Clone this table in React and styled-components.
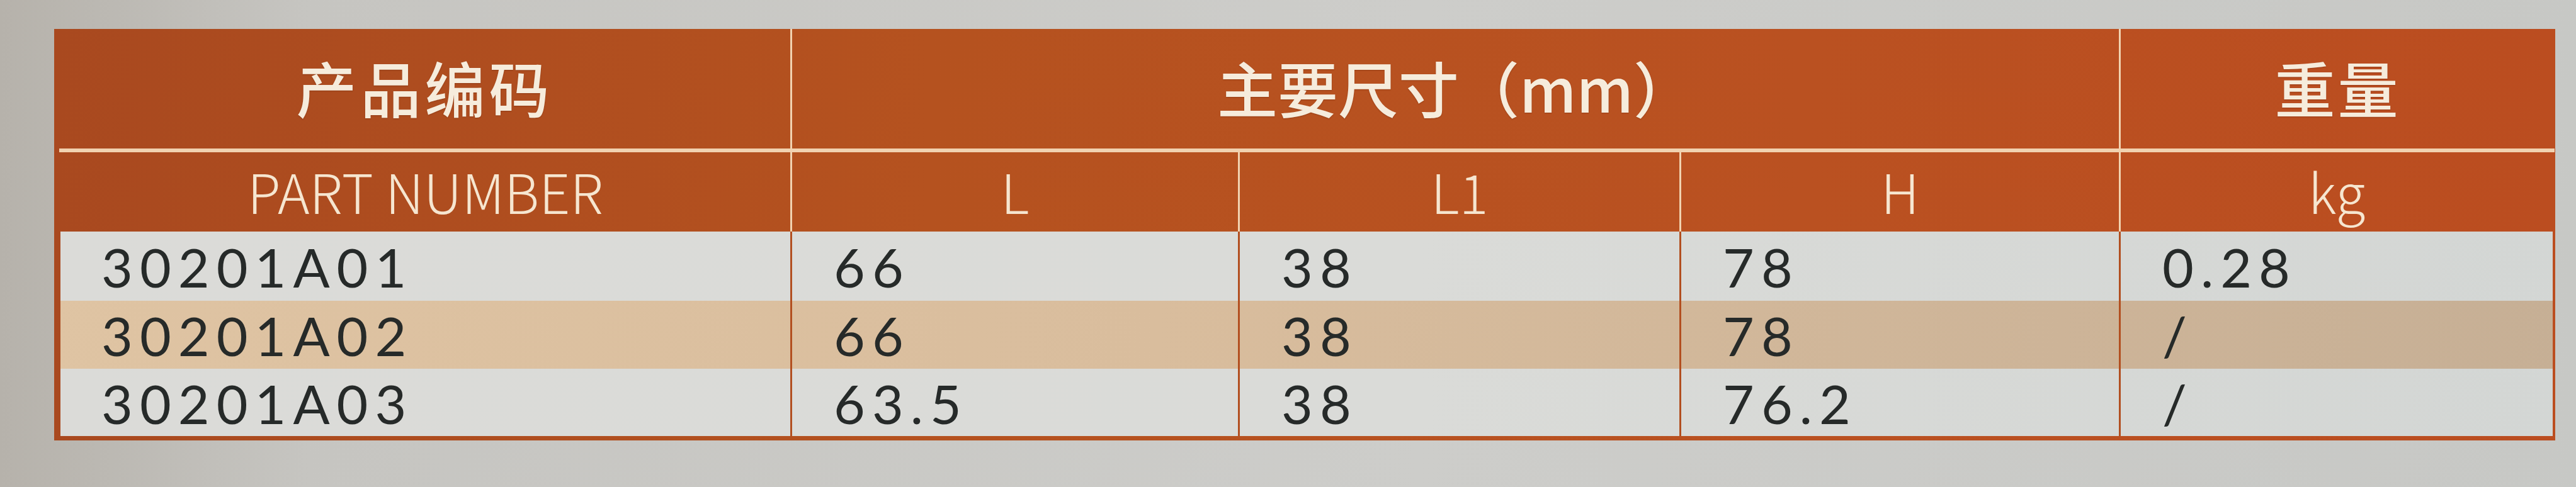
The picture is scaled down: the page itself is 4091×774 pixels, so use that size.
import React from "react";
import styled, { createGlobalStyle } from "styled-components";

// 表格数据
const rows = [
  { code: "30201A01", l: "66", l1: "38", h: "78", kg: "0.28" },
  { code: "30201A02", l: "66", l1: "38", h: "78", kg: "/" },
  { code: "30201A03", l: "63.5", l1: "38", h: "76.2", kg: "/" },
];

const ORANGE = "#b24f20";
const CREAM = "#f1d2b0";

const GlobalStyle = createGlobalStyle`
  html, body {
    margin: 0;
    padding: 0;
  }
  body {
    width: 4091px;
    height: 774px;
    overflow: hidden;
    background: linear-gradient(90deg, #b6b2ab 0%, #c6c5c1 12%, #cdcdca 55%, #c7c8c5 100%);
    font-family: "Noto Sans CJK SC", "Noto Sans", sans-serif;
  }
`;

const Page = styled.div`
  padding: 46px 0 0 86px;
`;

const Frame = styled.div`
  width: 3972px;
  box-sizing: border-box;
  padding: 0 4px 7px 10px;
  background: linear-gradient(90deg, #a9491f 0%, #b5521f 35%, #ba5121 70%, #bb4d20 100%);
  display: grid;
  grid-template-columns: 1159px 711px 701px 698px 689px;
  grid-template-rows: 196px 126px 110px 108px 107px;
`;

const TopHead = styled.div`
  grid-column: ${(p) => p.$col};
  display: flex;
  align-items: center;
  justify-content: center;
  box-sizing: border-box;
  border-bottom: 6px solid ${CREAM};
  border-left: ${(p) => (p.$divider ? `3px solid ${CREAM}` : "none")};
  margin-left: ${(p) => (p.$first ? "-2px" : "0")};
  margin-right: ${(p) => (p.$last ? "-3px" : "0")};
  color: #f6ecdc;
  font-family: "Noto Sans CJK SC", sans-serif;
  font-weight: 500;
  font-size: 96px;
  letter-spacing: ${(p) => p.$spacing || "0px"};
  line-height: 1;
  padding-bottom: 6px;
  text-shadow: 0 1px 2px rgba(90, 30, 5, 0.35);
`;

const SubHead = styled.div`
  display: flex;
  align-items: center;
  justify-content: center;
  box-sizing: border-box;
  border-left: ${(p) => (p.$divider ? `3px solid ${CREAM}` : "none")};
  color: #f6e6d0;
  font-family: "Noto Sans CJK SC", sans-serif;
  font-weight: 300;
  font-size: 86px;
  line-height: 1;
  padding-bottom: 4px;
`;

const Cell = styled.div`
  display: flex;
  align-items: center;
  box-sizing: border-box;
  padding-left: ${(p) => (p.$divider ? "66px" : "65px")};
  padding-top: 2px;
  border-left: ${(p) => (p.$divider ? `3px solid ${ORANGE}` : "none")};
  background: ${(p) =>
    p.$tan
      ? "linear-gradient(90deg, #dfc4a3 0%, #d9bd9d 45%, #cdb498 80%, #c6af95 100%)"
      : "linear-gradient(90deg, #dbdbd8 0%, #dadbd8 55%, #d3d6d4 100%)"};
  background-attachment: fixed;
  color: #262a29;
  font-family: Lato, "Noto Sans", sans-serif;
  font-weight: 400;
  font-size: 86px;
  letter-spacing: 11px;
  line-height: 1;
`;

export default function App() {
  return (
    <>
      <GlobalStyle />
      <Page>
        <Frame>
          <TopHead $col="1" $first $spacing="6px">产品编码</TopHead>
          <TopHead $col="2 / span 3" $divider>主要尺寸（mm）</TopHead>
          <TopHead $col="5" $divider $last $spacing="4px">重量</TopHead>

          <SubHead>PART NUMBER</SubHead>
          <SubHead $divider>L</SubHead>
          <SubHead $divider>L1</SubHead>
          <SubHead $divider>H</SubHead>
          <SubHead $divider>kg</SubHead>

          {rows.map((r, i) => (
            <React.Fragment key={r.code}>
              <Cell $tan={i === 1}>{r.code}</Cell>
              <Cell $tan={i === 1} $divider>{r.l}</Cell>
              <Cell $tan={i === 1} $divider>{r.l1}</Cell>
              <Cell $tan={i === 1} $divider>{r.h}</Cell>
              <Cell $tan={i === 1} $divider>{r.kg}</Cell>
            </React.Fragment>
          ))}
        </Frame>
      </Page>
    </>
  );
}
